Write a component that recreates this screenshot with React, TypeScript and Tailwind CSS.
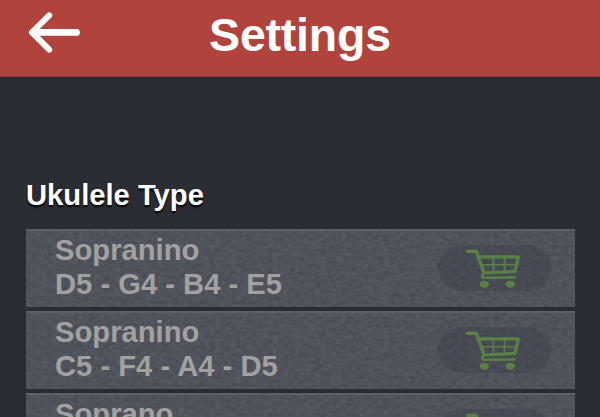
const tunings = [
  { name: "Sopranino", notes: "D5 - G4 - B4 - E5" },
  { name: "Sopranino", notes: "C5 - F4 - A4 - D5" },
  { name: "Soprano", notes: "" },
];

function BackArrow() {
  return (
    <svg className="h-[42px] w-[52px] shrink-0" viewBox="0 0 52 42" fill="none" stroke="#fff" strokeLinecap="round" strokeLinejoin="round">
      <path d="M21.2 3.4 4 20.4 21.2 37.6" strokeWidth="6" />
      <path d="M5 20.4h43.500" strokeWidth="6.800" />
    </svg>
  );
}

function CartIcon() {
  return (
    <svg className="h-[40px] w-[56px]" viewBox="0 0 56 40" fill="none" stroke="#578145" strokeLinecap="round" strokeLinejoin="round">
      <path d="M2.500 3.200H10q1.500 0 2 2L19 25" strokeWidth="3.400" />
      <path d="M13.500 8.900h40L50 23.300 18.500 25" strokeWidth="3.200" />
      <path d="M16 16.700h35" strokeWidth="1.600" />
      <path d="M28.300 9v15.500M39.500 9v15" strokeWidth="1.800" />
      <path d="M19 25l-1.700 2.500q-.8 2.200 2 2.200L49.500 29.500" strokeWidth="2.600" />
      <ellipse cx="19.300" cy="36.300" rx="4.700" ry="3.500" fill="#578145" stroke="none" />
      <ellipse cx="45.200" cy="36.300" rx="4.700" ry="3.500" fill="#578145" stroke="none" />
    </svg>
  );
}

function StoneTexture({ id }: { id: string }) {
  return (
    <svg className="absolute inset-0 h-full w-full" aria-hidden="true">
      <filter id={id} x="0" y="0" width="100%" height="100%" colorInterpolationFilters="sRGB">
        <feTurbulence type="fractalNoise" baseFrequency="0.19 0.27" numOctaves="2" seed="7" />
        <feColorMatrix values="0.09 0.04 0 0 0.247  0.09 0.04 0 0 0.26  0.09 0.04 0 0 0.292  0 0 0 0 1" />
      </filter>
      <rect width="100%" height="100%" filter={`url(#${id})`} />
    </svg>
  );
}

export default function App() {
  return (
    <div className="flex h-[417px] w-[600px] flex-col overflow-hidden bg-[#2b2d35] font-['Liberation_Sans',Arial,sans-serif] font-bold">
      <header className="grid h-[77px] shrink-0 grid-cols-[80px_1fr_80px] border-b border-[#8f3e3d] bg-[#b0433c]">
        <div className="pt-3 pl-7">
          <BackArrow />
        </div>
        <h1 className="pt-[9px] text-center text-[46.500px] leading-[53px] tracking-[-0.2px] text-white">Settings</h1>
      </header>
      <main className="px-[26px] pt-[101px]">
        <h2 className="h-[51px] text-[29.200px] leading-[34px] text-white [text-shadow:0_2px_2px_#000]">Ukulele Type</h2>
        <div className="flex w-[549px] flex-col gap-1">
          {tunings.map((tuning, i) => (
            <div key={i} className="relative isolate flex h-[78px] shrink-0 justify-between overflow-hidden border-t-2 border-[#5d6068] pr-6 pl-[29px]">
              <div className="absolute inset-0 -z-10">
                <StoneTexture id={`stone-${i}`} />
              </div>
              <div className="pt-0.5 text-[29.200px] leading-[34px] text-[#a1a1a1]">
                <p>{tuning.name}</p>
                {tuning.notes && <p>{tuning.notes}</p>}
              </div>
              <div className="mt-[14px] flex h-[46px] w-[113px] rounded-[23px] bg-[#363942]/30 pt-[3px] pl-[26.500px]">
                <CartIcon />
              </div>
            </div>
          ))}
        </div>
      </main>
    </div>
  );
}
